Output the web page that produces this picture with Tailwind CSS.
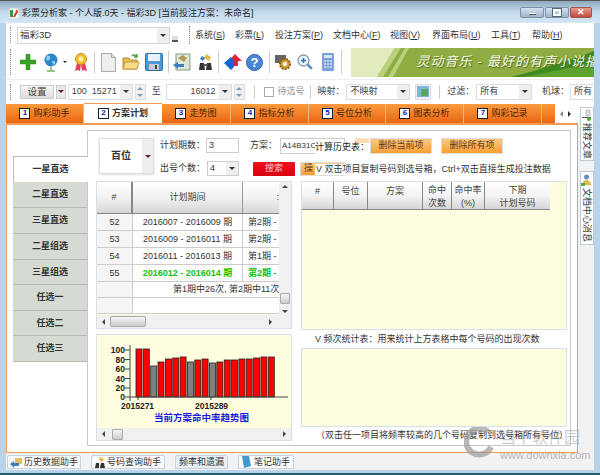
<!DOCTYPE html>
<html lang="zh">
<head>
  <meta charset="UTF-8">
  <title>彩票分析家</title>
  <script src="https://cdn.jsdelivr.net/npm/@tailwindcss/browser@4"></script>
</head>
<body class="w-[600px] h-[475px] overflow-hidden">
<div class="relative w-[600px] h-[475px] flex flex-col overflow-hidden bg-[#b7d4ec] text-[9px] leading-none text-[#333] font-['Liberation_Sans','Noto_Sans_CJK_SC',sans-serif] border-b-2 border-[#1f5f6b]">

  <!-- title bar -->
  <div class="h-[23px] shrink-0 flex items-center bg-gradient-to-b from-[#8fa9bd] via-[#c3d9ea] to-[#d5e6f4] border-t border-[#555] pl-[9px] pr-[8px]">
    <svg class="w-[10px] h-[11px] mt-[2px]" viewBox="0 0 10 11"><rect width="10" height="11" fill="#fff" stroke="#888" stroke-width=".5"/><rect x="1" y="2" width="3" height="7" fill="#3a9a3a"/><path d="M4 9 L8 1 L9 4 L6 9Z" fill="#d9322e"/></svg>
    <span class="ml-[3px] mt-[2px] text-[#222]">彩票分析家 - 个人版.0天 - 福彩3D [当前投注方案：未命名]</span>
    <div class="ml-auto flex gap-px mt-[1px]">
      <div class="w-[24px] h-[11px] rounded-[2px] border border-[#7d93a6] bg-gradient-to-b from-[#d5e2ee] to-[#9db4c8] flex items-center justify-center"><div class="w-[7px] h-[2px] mt-[3px] bg-white border-b border-[#556]"></div></div>
      <div class="w-[24px] h-[11px] rounded-[2px] border border-[#7d93a6] bg-gradient-to-b from-[#d5e2ee] to-[#9db4c8] flex items-center justify-center"><div class="w-[8px] h-[7px] border-2 border-white outline outline-[0.5px] outline-[#567]"></div></div>
      <div class="w-[22px] h-[11px] rounded-[2px] border border-[#a0564a] bg-gradient-to-b from-[#e59b8d] to-[#c4483a] flex items-center justify-center text-white text-[9px] font-bold">✕</div>
    </div>
  </div>

  <!-- client area -->
  <div class="flex-1 mx-[6px] mb-[3px] min-h-0 flex flex-col bg-[#f2f2f2]">
    <div class="h-[24px] shrink-0 bg-white flex items-center pl-[4px]">
      <span class="h-[16px] border-l border-dotted border-[#888]"></span>
      <div class="ml-[6px] w-[153px] h-[17px] border border-[#d5d5d5] flex items-center justify-between pl-[2px]">
        <span class="text-[9.5px]">福彩3D</span>
        <span class="w-[12px] h-[15px] bg-[#eee] flex items-center justify-center"><span class="border-x-[3px] border-t-[3px] border-x-transparent border-t-[#333]"></span></span>
      </div>
      <span class="ml-[2px] mt-[8px] w-[6px] h-[6px] bg-[#ddd] border-b-2 border-[#555]"></span>
      <span class="ml-[11px] h-[18px] border-l border-dotted border-[#888]"></span>
      <div class="relative h-full flex-1 ml-0">
        <span class="absolute left-[5px] top-[8px]">系统(<u>S</u>)</span>
        <span class="absolute left-[45px] top-[8px]">彩票(<u>L</u>)</span>
        <span class="absolute left-[85px] top-[8px]">投注方案(<u>P</u>)</span>
        <span class="absolute left-[143px] top-[8px]">文档中心(<u>F</u>)</span>
        <span class="absolute left-[200px] top-[8px]">视图(<u>V</u>)</span>
        <span class="absolute left-[242px] top-[8px]">界面布局(<u>U</u>)</span>
        <span class="absolute left-[301px] top-[8px]">工具(<u>T</u>)</span>
        <span class="absolute left-[342px] top-[8px]">帮助(<u>H</u>)</span>
      </div>
    </div>

    <!-- toolbar -->
    <div class="h-[33px] shrink-0 bg-white flex items-center pl-[4px] pb-[2px] border-b border-[#eee]">
      <span class="h-[26px] border-l border-dotted border-[#888]"></span>
      <svg class="ml-[9px] w-[16px] h-[16px]" viewBox="0 0 16 16"><path d="M6 0h4v6h6v4h-6v6H6v-6H0V6h6z" fill="#37a326" stroke="#2a8a1c" stroke-width=".5"/></svg>
      <svg class="ml-[8px] w-[14px] h-[19px]" viewBox="0 0 14 19"><circle cx="7" cy="7" r="6.5" fill="#2a86c8"/><path d="M3 3c3-1 4 1 3 3S3 8 2 6zM8 8c3-1 4 1 3 3l-2 1z" fill="#8fd0f0"/><path d="M7 14v3M3 18h8" stroke="#7fae5c" stroke-width="1.5"/></svg>
      <span class="ml-[5px] border-x-[2px] border-t-[2px] border-x-transparent border-t-[#222]"></span>
      <svg class="ml-[7px] w-[14px] h-[18px]" viewBox="0 0 14 18"><path d="M3 10l-2 8 3-1 2 1 1-7zM11 10l2 8-3-1-2 1-1-7z" fill="#e0405a"/><circle cx="7" cy="6" r="5.5" fill="#f3c02e" stroke="#d68a14"/><circle cx="7" cy="6" r="2.5" fill="#fff1b0"/></svg>
      <span class="ml-[6px] h-[22px] border-l border-[#ccc]"></span>
      <svg class="ml-[6px] w-[15px] h-[19px]" viewBox="0 0 15 19"><path d="M.5.5h10l4 4v14H.5z" fill="#eee" stroke="#aaa"/><path d="M10.500.5v4h4" fill="#ddd" stroke="#aaa"/></svg>
      <svg class="ml-[6px] w-[18px] h-[18px]" viewBox="0 0 18 18"><path d="M1 5h6l1 2h7v9H1z" fill="#e8bf55" stroke="#b58a28"/><path d="M1 16l2-7h14l-2 7z" fill="#f7dd8c" stroke="#c59a38"/><path d="M10 3c2-2 4-1 5 1M15 1v3h-3" fill="none" stroke="#3f9a30" stroke-width="1.300"/></svg>
      <svg class="ml-[5px] w-[18px] h-[18px]" viewBox="0 0 18 18"><rect x=".5" y=".5" width="17" height="17" rx="1" fill="#4a9bd6" stroke="#2d6e9e"/><rect x="3" y="1" width="12" height="7" fill="#e8f2fa"/><rect x="4" y="11" width="10" height="6" fill="#c8ccd0"/><rect x="10" y="12" width="2" height="4" fill="#444"/></svg>
      <span class="ml-[5px] h-[22px] border-l border-[#ccc]"></span>
      <svg class="ml-[4px] w-[18px] h-[18px]" viewBox="0 0 18 18"><rect x="3" y="1" width="14" height="16" fill="#dfe8d8" stroke="#8a9a80"/><path d="M5 5l5-3 4 3-3 4z" fill="#b5985a"/><path d="M0 12l5-3v2h6v3H5v2z" fill="#3c7fc2"/></svg>
      <svg class="ml-[7px] w-[15px] h-[18px]" viewBox="0 0 15 18"><path d="M8 1l5 3-2 4-5-3z" fill="#e9b94c"/><path d="M4 3l3 2-2 3-3-2z" fill="#3f7fc0"/><path d="M2 10h4l1 7H1zM9 10h4l1 7H8z" fill="#333"/><rect x="5" y="11" width="5" height="2" fill="#555"/></svg>
      <span class="ml-[5px] h-[22px] border-l border-[#ccc]"></span>
      <svg class="ml-[5px] w-[18px] h-[17px]" viewBox="0 0 18 17"><path d="M11 0l7 7h-4v5H9V7H5z" fill="#e2203a"/><path d="M0 9l7-6 3 4v6l-3 3z" fill="#1565d8"/></svg>
      <svg class="ml-[4px] w-[17px] h-[17px]" viewBox="0 0 17 17"><circle cx="8.500" cy="8.500" r="8" fill="#4a86d6" stroke="#2d5fae"/><text x="8.500" y="13" text-anchor="middle" fill="#fff" font-size="13" font-weight="700" font-family="Liberation Sans">?</text></svg>
      <span class="ml-[6px] h-[22px] border-l border-[#ccc]"></span>
      <svg class="ml-[5px] w-[17px] h-[17px]" viewBox="0 0 17 17"><rect x="0" y="1" width="11" height="8" fill="#666"/><circle cx="10" cy="10" r="5" fill="#d9a03a" stroke="#8a5a14" stroke-width="2" stroke-dasharray="2 1"/><circle cx="10" cy="10" r="2" fill="#fff"/></svg>
      <svg class="ml-[5px] w-[16px] h-[16px]" viewBox="0 0 16 16"><circle cx="6.500" cy="6.500" r="5.500" fill="#eef4fb" stroke="#7f9cb8" stroke-width="1.300"/><path d="M4 6.500h5M6.500 4v5" stroke="#2f6fc0" stroke-width="1.500"/><path d="M10.500 10.500l4.500 4.500" stroke="#5a8fc8" stroke-width="2.500"/></svg>
      <svg class="ml-[9px] w-[12px] h-[18px]" viewBox="0 0 12 18"><rect width="12" height="18" rx="1" fill="#7b9fd8"/><rect x="2" y="2" width="8" height="3" fill="#d8e6f8"/><path d="M2 8h8M2 11h8M2 14h8" stroke="#d8e6f8" stroke-dasharray="2 1" stroke-width="1.500"/></svg>
      <span class="ml-[7px] h-[24px] border-l border-[#ccc]"></span>
      <div class="relative ml-[9px] w-[244px] h-[29px] overflow-hidden">
        <svg class="absolute inset-0 w-[244px] h-[29px]" viewBox="0 0 244 29">
          <rect width="244" height="29" fill="#8fad42"/>
          <path d="M0 0H44L26 29H0Z" fill="#e2ebbd"/>
          <path d="M44 0H50L32 29H26ZM54 0H58L42 29H37Z" fill="#b9d07c"/>
          <path d="M160 29C190 22 225 10 244 3V29Z" fill="#3f8a20"/>
          <path d="M172 29C200 24 226 18 244 15V29Z" fill="#5da32e"/>
        </svg>
        <span class="absolute left-[66px] top-[7px] whitespace-nowrap text-[13px] tracking-[1px] italic text-[#f5f8e8] [text-shadow:1px_1px_1px_#4c6a18]">灵动音乐 - 最好的有声小说播</span>
      </div>
    </div>

    <!-- options row -->
    <div class="h-[23px] shrink-0 bg-white flex items-center pl-[4px] text-[#444]">
      <span class="h-[16px] border-l border-dotted border-[#888]"></span>
      <div class="ml-[9px] w-[34px] h-[14px] border border-[#ccc] bg-gradient-to-b from-[#f8f8f8] to-[#ddd] flex items-center justify-center text-[9.500px]">设置</div>
      <div class="ml-[2px] w-[10px] h-[14px] border border-[#ccc] bg-[#e8e8e8] flex items-center justify-center"><span class="border-x-[3px] border-t-[3px] border-x-transparent border-t-[#622]"></span></div>
      <div class="ml-[2px] w-[65px] h-[16px] border border-[#ddd] flex items-center justify-end"><span>100</span><span class="ml-[5px] mr-[3px]">15271</span><span class="shrink-0 w-[12px] h-[14px] bg-[#eee] flex items-center justify-center"><span class="border-x-[3px] border-t-[3px] border-x-transparent border-t-[#333]"></span></span></div>
      <div class="ml-[2px] w-[11px] h-[16px] border border-[#ddd] bg-[#f0f0f0] flex flex-col items-center justify-around"><span class="border-x-[3px] border-b-[3px] border-x-transparent border-b-[#7a9cc0]"></span><span class="border-x-[3px] border-t-[3px] border-x-transparent border-t-[#7a9cc0]"></span></div>
      <span class="ml-[6px] w-[14px]">至</span>
      <div class="w-[66px] h-[16px] border border-[#ddd] flex items-center justify-end"><span class="mr-[3px]">16012</span><span class="shrink-0 w-[12px] h-[14px] bg-[#eee] flex items-center justify-center"><span class="border-x-[3px] border-t-[3px] border-x-transparent border-t-[#333]"></span></span></div>
      <div class="ml-[2px] w-[11px] h-[16px] border border-[#ddd] bg-[#f0f0f0] flex flex-col items-center justify-around"><span class="border-x-[3px] border-b-[3px] border-x-transparent border-b-[#7a9cc0]"></span><span class="border-x-[3px] border-t-[3px] border-x-transparent border-t-[#7a9cc0]"></span></div>
      <span class="ml-[9px] h-[14px] border-l border-[#ccc]"></span>
      <span class="ml-[9px] w-[10px] h-[10px] border border-[#aaa] bg-white"></span>
      <span class="ml-[4px] w-[32px] text-[#999]">待选号</span>
      <span class="h-[14px] border-l border-[#ccc]"></span>
      <span class="ml-[7px] w-[29px]">映射：</span>
      <div class="w-[64px] h-[16px] border border-[#ddd] flex items-center justify-between pl-[3px]"><span>不映射</span><span class="shrink-0 w-[12px] h-[14px] bg-[#eee] flex items-center justify-center"><span class="border-x-[3px] border-t-[3px] border-x-transparent border-t-[#333]"></span></span></div>
      <div class="ml-[5px] w-[16px] h-[16px] border border-[#ddd] bg-[#eef2f6] flex items-center justify-center"><svg class="w-[12px] h-[11px]" viewBox="0 0 12 11"><rect width="12" height="11" fill="#7fb5dc"/><path d="M4 3h7v7H4z" fill="#5aa85a"/></svg></div>
      <span class="ml-[8px] h-[14px] border-l border-[#ccc]"></span>
      <span class="ml-[7px] w-[29px]">过滤：</span>
      <div class="w-[56px] h-[16px] border border-[#ddd] flex items-center justify-between pl-[3px]"><span>所有</span><span class="shrink-0 w-[12px] h-[14px] bg-[#eee] flex items-center justify-center"><span class="border-x-[3px] border-t-[3px] border-x-transparent border-t-[#333]"></span></span></div>
      <span class="ml-[10px] w-[28px]">机球：</span>
      <div class="w-[24px] h-[16px] border-y border-l border-[#ddd] flex items-center pl-[3px]">所有</div>
    </div>

    <!-- top tabs -->
    <div class="h-[20px] shrink-0 bg-white flex items-stretch pt-px">
      <div class="w-[78px] shrink-0 bg-gradient-to-b from-[#fb9a3c] to-[#e8660f] border-r border-[#f7b77c] flex items-center justify-center gap-[3px] text-[#4a2400]"><span class="w-[11px] h-[11px] bg-white border border-[#123] text-[8px] font-bold text-[#12a] text-center">1</span>购彩助手</div>
      <div class="w-[78px] shrink-0 -mt-px bg-white border-t border-[#f59a55] flex items-center justify-center gap-[3px] font-bold"><span class="w-[11px] h-[11px] bg-white border border-[#123] text-[8px] font-bold text-[#12a] text-center">2</span>方案计划</div>
      <div class="w-[69px] shrink-0 bg-gradient-to-b from-[#fb9a3c] to-[#e8660f] border-r border-[#f7b77c] flex items-center justify-center gap-[3px] text-[#4a2400]"><span class="w-[11px] h-[11px] bg-white border border-[#123] text-[8px] font-bold text-[#12a] text-center">3</span>走势图</div>
      <div class="w-[78px] shrink-0 bg-gradient-to-b from-[#fb9a3c] to-[#e8660f] border-r border-[#f7b77c] flex items-center justify-center gap-[3px] text-[#4a2400]"><span class="w-[11px] h-[11px] bg-white border border-[#123] text-[8px] font-bold text-[#12a] text-center">4</span>指标分析</div>
      <div class="w-[77px] shrink-0 bg-gradient-to-b from-[#fb9a3c] to-[#e8660f] border-r border-[#f7b77c] flex items-center justify-center gap-[3px] text-[#4a2400]"><span class="w-[11px] h-[11px] bg-white border border-[#123] text-[8px] font-bold text-[#12a] text-center">5</span>号位分析</div>
      <div class="w-[78px] shrink-0 bg-gradient-to-b from-[#fb9a3c] to-[#e8660f] border-r border-[#f7b77c] flex items-center justify-center gap-[3px] text-[#4a2400]"><span class="w-[11px] h-[11px] bg-white border border-[#123] text-[8px] font-bold text-[#12a] text-center">6</span>图表分析</div>
      <div class="w-[78px] shrink-0 bg-gradient-to-b from-[#fb9a3c] to-[#e8660f] border-r border-[#f7b77c] flex items-center justify-center gap-[3px] text-[#4a2400]"><span class="w-[11px] h-[11px] bg-white border border-[#123] text-[8px] font-bold text-[#12a] text-center">7</span>购彩记录</div>
      <div class="w-[13px] shrink-0 bg-gradient-to-b from-[#fb9a3c] to-[#e8660f]"></div>
      <div class="w-[20px] shrink-0 flex items-center justify-center gap-[5px]"><span class="border-y-[3px] border-r-[3px] border-y-transparent border-r-[#888]"></span><span class="border-y-[3px] border-l-[3px] border-y-transparent border-l-[#333]"></span></div>
    </div>

    <!-- middle: page + vertical side tabs -->
    <div class="flex-1 min-h-0 flex">
      <div class="w-[572px] shrink-0 h-[330px] bg-white border border-[#f59a55] border-t-2 flex pl-[6px]">
        <!-- left tabs -->
        <div class="relative z-10 w-[74px] shrink-0 pt-[31px] flex flex-col font-bold text-[#333]">
          <div class="w-[75px] h-[26px] border-t border-l border-[#bbb] bg-white flex items-center justify-center pr-px">一星直选</div>
          <div class="h-[26px] border-b border-[#b5bbb0] bg-[#d5dbd2] flex items-center justify-center">二星直选</div>
          <div class="h-[26px] border-b border-[#b5bbb0] bg-[#d5dbd2] flex items-center justify-center">三星直选</div>
          <div class="h-[26px] border-b border-[#b5bbb0] bg-[#d5dbd2] flex items-center justify-center">二星组选</div>
          <div class="h-[25px] border-b border-[#b5bbb0] bg-[#d5dbd2] flex items-center justify-center">三星组选</div>
          <div class="h-[26px] border-b border-[#b5bbb0] bg-[#d5dbd2] flex items-center justify-center">任选一</div>
          <div class="h-[25px] border-b border-[#b5bbb0] bg-[#d5dbd2] flex items-center justify-center">任选二</div>
          <div class="h-[26px] border-b border-[#b5bbb0] bg-[#d5dbd2] flex items-center justify-center">任选三</div>
        </div>

        <!-- panel -->
        <div class="relative w-[484px] h-[316px] mt-[5px] border border-[#c8c8c8] bg-white flex flex-col pl-[8px]">
          <div class="h-[50px] shrink-0 flex pt-[6px]">
            <div class="ml-[3px] mt-px w-[55px] h-[36px] border border-[#ddd] flex items-stretch shadow-sm">
              <span class="flex-1 flex items-center justify-center font-bold text-[10px]">百位</span>
              <span class="w-[11px] bg-[#eee] flex items-center justify-center"><span class="border-x-[3px] border-t-[3px] border-x-transparent border-t-[#622]"></span></span>
            </div>
            <div class="ml-[6px] flex flex-col gap-[7px]">
              <div class="h-[17px] flex items-center">
                <span class="w-[46px]">计划期数：</span>
                <span class="w-[33px] h-[15px] border border-[#ccc] flex items-center pl-[2px]">3</span>
                <span class="ml-[11px] w-[30px]">方案：</span>
                <span class="w-[65px] h-[16px] border border-[#ccc] flex items-center pl-px text-[8px] overflow-hidden whitespace-nowrap">A14B31C</span>
                <span class="ml-[10px] w-[14px] h-[16px] bg-gradient-to-b from-[#fde4c4] to-[#fbb15e]"></span>
                <span class="ml-px w-[62px] h-[16px] border border-[#ddd] bg-gradient-to-b from-[#fcc982] to-[#f99f2e] flex items-center justify-center text-[#5a3a10]">删除当前项</span>
                <span class="ml-[9px] w-[62px] h-[16px] border border-[#ddd] bg-gradient-to-b from-[#fcc982] to-[#f99f2e] flex items-center justify-center text-[#5a3a10]">删除所有项</span>
              </div>
              <div class="h-[15px] flex items-center">
                <span class="w-[47px]">出号个数：</span>
                <span class="w-[32px] h-[15px] border border-[#ccc] flex items-center justify-between pl-[2px]">4<span class="shrink-0 w-[12px] h-[13px] bg-[#eee] flex items-center justify-center"><span class="border-x-[3px] border-t-[3px] border-x-transparent border-t-[#333]"></span></span></span>
                <span class="ml-[14px] w-[42px] h-[14px] rounded-[1px] bg-gradient-to-b from-[#f0101a] to-[#d80010] flex items-center justify-center text-[#fcc]">搜索</span>
                <span class="ml-[5px] w-[45px] h-[14px] border border-[#ddd] bg-gradient-to-b from-[#fcc982] to-[#f99f2e] pl-[3px] flex items-center text-[#5a3a10]">操</span>
              </div>
            </div>
          </div>

          <!-- overlapping labels -->
          <span class="absolute left-[227px] top-[12px] h-[11px] bg-white text-[#222]">计算历史表：</span>
          <span class="absolute left-[227px] top-[33px] h-[11px] pt-px pl-px bg-white text-[#333]">V 双击项目复制号码到选号箱，Ctrl+双击直接生成投注数据</span>

          <div class="flex gap-[9px]">
            <!-- left column -->
            <div class="w-[196px] shrink-0 flex flex-col gap-[5px]">
              <div class="h-[148px] border border-[#d5e0ec] flex flex-col bg-[#fffde0] overflow-hidden">
                <div class="flex-1 min-h-0 flex">
                  <div class="w-[182px] shrink-0 flex flex-col overflow-hidden">
                    <div class="h-[32px] shrink-0 flex border-b border-[#888] bg-gradient-to-b from-[#fff] via-[#f2f2f2] to-[#d6d6d6] text-[#444]">
                      <span class="w-[36px] border-r-2 border-[#888] flex items-center justify-center">#</span>
                      <span class="w-[110px] border-r border-[#999] flex items-center justify-center">计划期间</span>
                      <span class="flex-1 flex items-center justify-end">:</span>
                    </div>
                    <div class="h-[17px] flex border-b border-[#ccc] bg-white">
                      <span class="w-[36px] bg-[#f5f5f5] border-r border-[#ccc] flex items-center justify-center">52</span>
                      <span class="w-[110px] border-r border-[#ccc] flex items-center justify-center">2016007 - 2016009 期</span>
                      <span class="flex-1 pl-[5px] flex items-center whitespace-nowrap overflow-hidden">第2期 -</span>
                    </div>
                    <div class="h-[17px] flex border-b border-[#ccc] bg-white">
                      <span class="w-[36px] bg-[#f5f5f5] border-r border-[#ccc] flex items-center justify-center">53</span>
                      <span class="w-[110px] border-r border-[#ccc] flex items-center justify-center">2016009 - 2016011 期</span>
                      <span class="flex-1 pl-[5px] flex items-center whitespace-nowrap overflow-hidden">第2期 -</span>
                    </div>
                    <div class="h-[17px] flex border-b border-[#ccc] bg-white">
                      <span class="w-[36px] bg-[#f5f5f5] border-r border-[#ccc] flex items-center justify-center">54</span>
                      <span class="w-[110px] border-r border-[#ccc] flex items-center justify-center">2016011 - 2016013 期</span>
                      <span class="flex-1 pl-[5px] flex items-center whitespace-nowrap overflow-hidden">第1期 -</span>
                    </div>
                    <div class="h-[17px] flex border-b border-[#ccc] bg-white font-bold text-[#10c010]">
                      <span class="w-[36px] bg-[#f5f5f5] border-r border-[#ccc] flex items-center justify-center font-normal text-[#333]">55</span>
                      <span class="w-[110px] border-r border-[#ccc] flex items-center justify-center">2016012 - 2016014 期</span>
                      <span class="flex-1 pl-[5px] flex items-center whitespace-nowrap overflow-hidden">第2期 -</span>
                    </div>
                    <div class="h-[16px] flex border-b border-[#ccc] bg-white">
                      <span class="w-[36px] shrink-0 bg-[#f5f5f5] border-r border-[#ccc]"></span>
                      <span class="pl-[40px] flex items-center whitespace-nowrap">第1期中26次, 第2期中11次</span>
                    </div>
                    <div class="h-[16px] flex bg-white border-b border-[#ccc]">
                      <span class="w-[36px] bg-[#f5f5f5] border-r border-[#ccc]"></span>
                    </div>
                  </div>
                  <div class="flex-1 bg-[#f0f0f0] flex flex-col items-center justify-between pt-[3px] pb-[2px]">
                    <span class="border-x-[3px] border-b-[3px] border-x-transparent border-b-[#444]"></span>
                    <span class="mt-auto mb-[6px] w-[10px] h-[11px] border border-[#aaa] bg-gradient-to-b from-[#f5f5f5] to-[#ccc] rounded-[1px]"></span>
                    <span class="border-x-[3px] border-t-[3px] border-x-transparent border-t-[#444]"></span>
                  </div>
                </div>
                <div class="h-[13px] shrink-0 bg-[#f0f0f0] flex items-center px-[5px]">
                  <span class="border-y-[3px] border-r-[3px] border-y-transparent border-r-[#444]"></span>
                  <span class="ml-[5px] w-[36px] h-[11px] border border-[#aaa] bg-gradient-to-b from-[#f5f5f5] to-[#ccc] rounded-[2px]"></span>
                  <span class="ml-auto mr-[14px] border-y-[3px] border-l-[3px] border-y-transparent border-l-[#444]"></span>
                </div>
              </div>

              <!-- chart -->
              <div class="h-[107px] border border-[#d5e0ec] flex flex-col">
                <svg class="w-[194px] h-[93px] bg-[#fffde0] font-['Liberation_Sans','Noto_Sans_CJK_SC',sans-serif]" viewBox="0 0 194 93">
                  <g stroke="#222" stroke-width=".8">
                    <rect x="39" y="14" width="6" height="48" fill="#f00"/><rect x="46.300" y="14" width="6" height="48" fill="#f00"/><rect x="53.700" y="31" width="6" height="31" fill="#808080"/><rect x="61" y="27" width="6" height="35" fill="#f00"/><rect x="68.400" y="24" width="6" height="38" fill="#f00"/><rect x="75.700" y="23" width="6" height="39" fill="#f00"/><rect x="83.100" y="22" width="6" height="40" fill="#f00"/><rect x="90.400" y="27" width="6" height="35" fill="#808080"/><rect x="97.800" y="25" width="6" height="37" fill="#f00"/><rect x="105.100" y="24" width="6" height="38" fill="#f00"/><rect x="112.500" y="28" width="6" height="34" fill="#808080"/><rect x="119.800" y="27" width="6" height="35" fill="#f00"/><rect x="127.200" y="25" width="6" height="37" fill="#f00"/><rect x="134.500" y="25" width="6" height="37" fill="#f00"/><rect x="141.900" y="24" width="6" height="38" fill="#f00"/><rect x="149.200" y="24" width="6" height="38" fill="#f00"/><rect x="156.600" y="23" width="6" height="39" fill="#f00"/><rect x="163.900" y="22" width="6" height="40" fill="#f00"/><rect x="171.300" y="22" width="6" height="40" fill="#f00"/>
                  </g>
                  <path d="M33 10V66M28 62H191M28 15h5M28 24.500h5M28 34h5M28 43.500h5M28 53h5M41 62v3M114 62v3" stroke="#444" stroke-width="1" fill="none"/>
                  <g font-size="8.500" font-weight="700" fill="#222" text-anchor="end"><text x="28" y="18">100</text><text x="28" y="27.500">80</text><text x="28" y="37">60</text><text x="28" y="46.500">40</text><text x="28" y="56">20</text><text x="28" y="65">0</text></g>
                  <g font-size="8.500" font-weight="700" fill="#222"><text x="24" y="74">2015271</text><text x="98" y="74">2015289</text></g>
                  <text x="57" y="86" font-size="9.500" font-weight="700" fill="#1a1ae0">当前方案命中率趋势图</text>
                </svg>
                <div class="flex-1 bg-[#f0f0f0] flex items-center px-[5px]">
                  <span class="border-y-[3px] border-r-[3px] border-y-transparent border-r-[#444]"></span>
                  <span class="ml-[7px] w-[11px] h-[11px] border border-[#aaa] bg-gradient-to-b from-[#f5f5f5] to-[#ccc] rounded-[1px]"></span>
                  <span class="ml-auto border-y-[3px] border-l-[3px] border-y-transparent border-l-[#444]"></span>
                </div>
              </div>
            </div>

            <!-- right column -->
            <div class="w-[266px] shrink-0 flex flex-col">
              <div class="h-[149px] border border-[#d5e0ec] bg-[#fffde0]">
                <div class="h-[28px] w-[248px] flex border-b border-[#888] bg-gradient-to-b from-[#fff] via-[#f4f4f4] to-[#d6d6d6] text-[#444] text-center leading-[13px]">
                  <span class="w-[32px] border-r border-[#888] pt-[3px]">#</span>
                  <span class="w-[34px] border-r border-[#888] pt-[3px]">号位</span>
                  <span class="w-[55px] border-r border-[#888] pt-[3px]">方案</span>
                  <span class="w-[29px] border-r border-[#888] pt-[2px]">命中<br>次数</span>
                  <span class="w-[33px] border-r border-[#888] pt-[2px]">命中率<br>(%)</span>
                  <span class="flex-1 pt-[2px]">下期<br>计划号码</span>
                </div>
              </div>
              <div class="h-[18px] shrink-0 pl-[14px] flex items-center text-[#333]">V 频次统计表：用来统计上方表格中每个号码的出现次数</div>
              <div class="h-[79px] shrink-0 border border-[#d5e0ec] bg-[#fffde0]"></div>
              <div class="pl-[15px] pt-[4px] text-[#333]">（双击任一项目将频率较高的几个号码复制到选号箱所有号位）</div>
            </div>
          </div>
        </div>
      </div>

      <!-- vertical side tabs -->
      <div class="flex-1 -mt-[16px] flex flex-col items-center pl-px">
        <div class="w-[14px] h-[54px] border border-[#c0c8d0] bg-white flex flex-col items-center pt-[1px]">
          <svg class="w-[11px] h-[12px] shrink-0" viewBox="0 0 11 12"><path d="M1 8h9v1H1z" fill="#555"/><path d="M5 1h4v6H5z" fill="#ddd" stroke="#999" stroke-width=".5"/><circle cx="8" cy="10" r="2" fill="#4aa83a"/></svg>
          <span class="mt-[2px] [writing-mode:vertical-rl] [text-orientation:sideways]">推荐文章</span>
        </div>
        <div class="mt-[10px] w-[14px] h-[74px] border border-[#c0c8d0] bg-white flex flex-col items-center justify-start pt-[2px]">
          <svg class="w-[11px] h-[12px] shrink-0" viewBox="0 0 11 12"><circle cx="5.500" cy="3" r="2.500" fill="#6a8fc8"/><path d="M1 11c0-3 2-5 4.500-5S10 8 10 11z" fill="#e0b850"/><path d="M0 9h4v3H0z" fill="#5aa84a"/></svg>
          <span class="mt-[2px] [writing-mode:vertical-rl] [text-orientation:sideways]">文档中心消息</span>
        </div>
      </div>
    </div>

    <!-- bottom tabs -->
    <div class="h-[17px] shrink-0 flex items-start gap-[10px] pl-px pt-[2px] text-[#333]">
      <div class="w-[74px] h-[14px] border border-[#c5d3e0] rounded-t-[2px] bg-[#fbfbfb] flex items-center justify-center gap-[2px]"><svg class="shrink-0 w-[12px] h-[11px]" viewBox="0 0 12 11"><path d="M5 1h7v6H5z" fill="#e2c05a"/><path d="M0 7l4-3v2h5v3H4v2z" fill="#3f7fc0"/></svg>历史数据助手</div>
      <div class="w-[74px] h-[14px] border border-[#c5d3e0] rounded-t-[2px] bg-[#fbfbfb] flex items-center justify-center gap-[2px]"><svg class="shrink-0 w-[10px] h-[11px]" viewBox="0 0 10 11"><path d="M5 0l4 2-2 3-3-2z" fill="#e9b94c"/><path d="M1 6h3v5H0zM6 6h3l1 5H5z" fill="#333"/></svg>号码查询助手</div>
      <div class="w-[53px] h-[14px] border border-[#c5d3e0] rounded-t-[2px] bg-[#e9eef2] flex items-center justify-center">频率和遗漏</div>
      <div class="w-[56px] h-[14px] border border-[#c5d3e0] rounded-t-[2px] bg-[#fbfbfb] flex items-center justify-center gap-[3px]"><svg class="shrink-0 w-[9px] h-[12px]" viewBox="0 0 9 12"><path d="M0 0h7l2 10-7 2z" fill="#3f9ad0"/></svg>笔记助手</div>
    </div>
  </div>

  <!-- watermark -->
  <svg class="absolute left-[464px] top-[427px] w-[30px] h-[31px]" viewBox="0 0 30 31"><path d="M24 5A13 13 0 1 0 27 20" fill="none" stroke="#999" stroke-opacity=".7" stroke-width="6"/></svg>
  <span class="absolute left-[500px] top-[430px] text-[16px] text-[#999]/50">当下软件园</span>
  <span class="absolute left-[500px] top-[450px] text-[11px] text-[#999]/70">www.downxia.com</span>
</div>
</body>
</html>
